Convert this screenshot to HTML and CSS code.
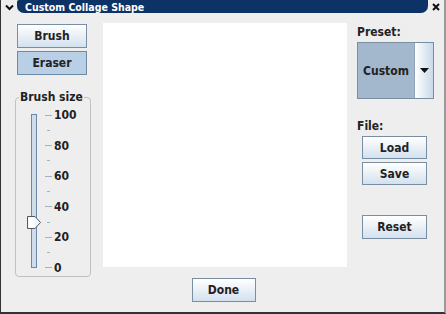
FILE: index.html
```html
<!DOCTYPE html>
<html>
<head>
<meta charset="utf-8">
<link rel="stylesheet" href="styles.css">
</head>
<body>
<div class="window">
  <div class="titlebar">
    <div class="tb-menu">
      <svg width="9" height="7" viewBox="0 0 9 7"><path d="M1 1.5 L4.5 5 L8 1.5" fill="none" stroke="#111" stroke-width="2"/></svg>
    </div>
    <div class="tb-bar"><span class="tb-title">Custom Collage Shape</span></div>
    <div class="tb-close">
      <svg width="8" height="8" viewBox="0 0 8 8"><path d="M1 1 L7 7 M7 1 L1 7" stroke="#111" stroke-width="2"/></svg>
    </div>
  </div>
  <div class="main">
    <div class="left">
      <button class="btn tool">Brush</button>
      <button class="btn tool selected">Eraser</button>
      <fieldset class="group">
        <legend>Brush size</legend>
        <div class="slider">
          <div class="track"></div>
          <div class="thumb">
            <svg width="16" height="16" viewBox="0 0 16 16"><path d="M1.5 1.5 H9 L14.5 7.5 L9 13.5 H1.5 Z" fill="#eef4fb" stroke="#556" stroke-width="1"/><path d="M2.5 2.5 H8.5 L8.5 12.5 H2.5 Z" fill="#fff"/></svg>
          </div>
          <div class="ticks">
            <div class="tick major"><i></i><span>100</span></div>
            <div class="tick"><i></i></div>
            <div class="tick major"><i></i><span>80</span></div>
            <div class="tick"><i></i></div>
            <div class="tick major"><i></i><span>60</span></div>
            <div class="tick"><i></i></div>
            <div class="tick major"><i></i><span>40</span></div>
            <div class="tick"><i></i></div>
            <div class="tick major"><i></i><span>20</span></div>
            <div class="tick"><i></i></div>
            <div class="tick major"><i></i><span>0</span></div>
          </div>
        </div>
      </fieldset>
    </div>
    <div class="canvas"></div>
    <div class="right">
      <div class="label">Preset:</div>
      <div class="combo">
        <div class="combo-value">Custom</div>
        <div class="combo-arrow"><svg width="9" height="5" viewBox="0 0 9 5"><path d="M0 0 H9 L4.5 5 Z" fill="#111"/></svg></div>
      </div>
      <div class="label file-label">File:</div>
      <button class="btn small">Load</button>
      <button class="btn small">Save</button>
      <button class="btn small reset">Reset</button>
    </div>
  </div>
  <div class="bottom">
    <button class="btn done">Done</button>
  </div>
</div>
</body>
</html>
```
FILE: styles.css
```css
* { box-sizing: border-box; }
html, body { margin: 0; padding: 0; }
body {
  width: 446px;
  height: 314px;
  overflow: hidden;
  font-family: "DejaVu Sans", sans-serif;
  font-weight: bold;
  font-size: 11px;
  color: #222;
  background: #eeeeee;
}
.window {
  width: 446px;
  height: 314px;
  background: #eeeeee;
  border-left: 1px solid #333;
  border-right: 2px solid #999;
  border-bottom: 2px solid #333;
  display: flex;
  flex-direction: column;
}
.titlebar {
  height: 14px;
  display: flex;
  background: #eeeeee;
}
.tb-menu {
  width: 16px;
  display: flex;
  align-items: center;
  justify-content: center;
}
.tb-bar {
  flex: 1;
  height: 13px;
  background: #0d3366;
  border-radius: 2px 0 0 0;
  border-bottom-left-radius: 7px;
  border-bottom-right-radius: 7px;
  display: flex;
  align-items: center;
  padding-left: 8px;
}
.tb-title {
  color: #fff;
  font-size: 10.5px;
  letter-spacing: 0;
  font-family: "DejaVu Sans Condensed", "DejaVu Sans", sans-serif;
}
.tb-close {
  width: 16px;
  display: flex;
  align-items: center;
  justify-content: center;
}
.main {
  display: flex;
  padding: 9px 0 0 14px;
  height: 264px;
}
.left {
  width: 76px;
  display: flex;
  flex-direction: column;
  align-items: flex-start;
}
.btn {
  font-family: "DejaVu Sans Condensed", "DejaVu Sans", sans-serif;
  font-weight: bold;
  font-size: 12px;
  color: #222;
  border: 1px solid #7a8ea3;
  background: linear-gradient(#ffffff, #d3e1ee);
  padding: 0;
  margin: 0;
}
.tool {
  width: 70px;
  height: 24px;
  margin-left: 2px;
  margin-top: 1px;
}
.tool + .tool { margin-top: 3px; }
.tool.selected {
  background: #b8cfe6;
  border-color: #6f8aa6;
}
.group {
  margin: 16px 0 0 0;
  width: 76px;
  height: 186px;
  border: 1px solid #c2c2c2;
  border-radius: 4px;
  padding: 0;
  position: relative;
}
.group legend {
  padding: 0 1px;
  margin-left: 3px;
  font-size: 12px;
  font-family: "DejaVu Sans Condensed", "DejaVu Sans", sans-serif;
  line-height: 12px;
}
.slider {
  position: relative;
  height: 163px;
  display: flex;
  margin-top: 6px;
}
.track {
  margin-left: 15px;
  margin-top: 5px;
  width: 6px;
  height: 154px;
  border: 1px solid #6a88aa;
  background: #cfdde9;
}
.thumb {
  position: absolute;
  left: 10px;
  top: 106px;
  width: 16px;
  height: 16px;
}
.thumb svg { display: block; }
.ticks {
  margin-left: 8px;
  margin-top: 6px;
  height: 153px;
  display: flex;
  flex-direction: column;
  justify-content: space-between;
}
.tick {
  height: 0;
  display: flex;
  align-items: center;
}
.tick i {
  display: block;
  width: 7px;
  height: 1px;
  background: #9fb3c8;
}
.tick:not(.major) i {
  width: 3px;
  margin-left: 2px;
}
.tick span {
  margin-left: 2px;
  font-size: 12px;
  line-height: 12px;
  color: #222;
  font-family: "DejaVu Sans Condensed", "DejaVu Sans", sans-serif;
}
.canvas {
  margin-left: 12px;
  width: 244px;
  height: 244px;
  background: #ffffff;
}
.right {
  margin-left: 10px;
  width: 76px;
  display: flex;
  flex-direction: column;
  align-items: flex-start;
}
.label {
  font-size: 12px;
  font-family: "DejaVu Sans Condensed", "DejaVu Sans", sans-serif;
  line-height: 14px;
  margin-top: 2px;
}
.combo {
  margin-top: 3px;
  width: 77px;
  height: 57px;
  display: flex;
  border: 1px solid #7a8ea3;
}
.combo-value {
  flex: 1;
  background: #a3b8cc;
  display: flex;
  align-items: center;
  justify-content: center;
  font-size: 12px;
  font-family: "DejaVu Sans Condensed", "DejaVu Sans", sans-serif;
  border-right: 1px solid #8fa3b8;
}
.combo-arrow {
  width: 18px;
  background: linear-gradient(90deg, #ffffff, #c9d9e9);
  display: flex;
  align-items: center;
  justify-content: center;
}
.file-label { margin-top: 20px; }
.small {
  width: 65px;
  height: 23px;
  margin-left: 5px;
  margin-top: 3px;
}
.small + .small { margin-top: 3px; }
.small.reset { margin-top: 30px; height: 24px; }
.bottom {
  display: flex;
  justify-content: center;
  padding-left: 2px;
}
.done {
  width: 64px;
  height: 24px;
}
```
